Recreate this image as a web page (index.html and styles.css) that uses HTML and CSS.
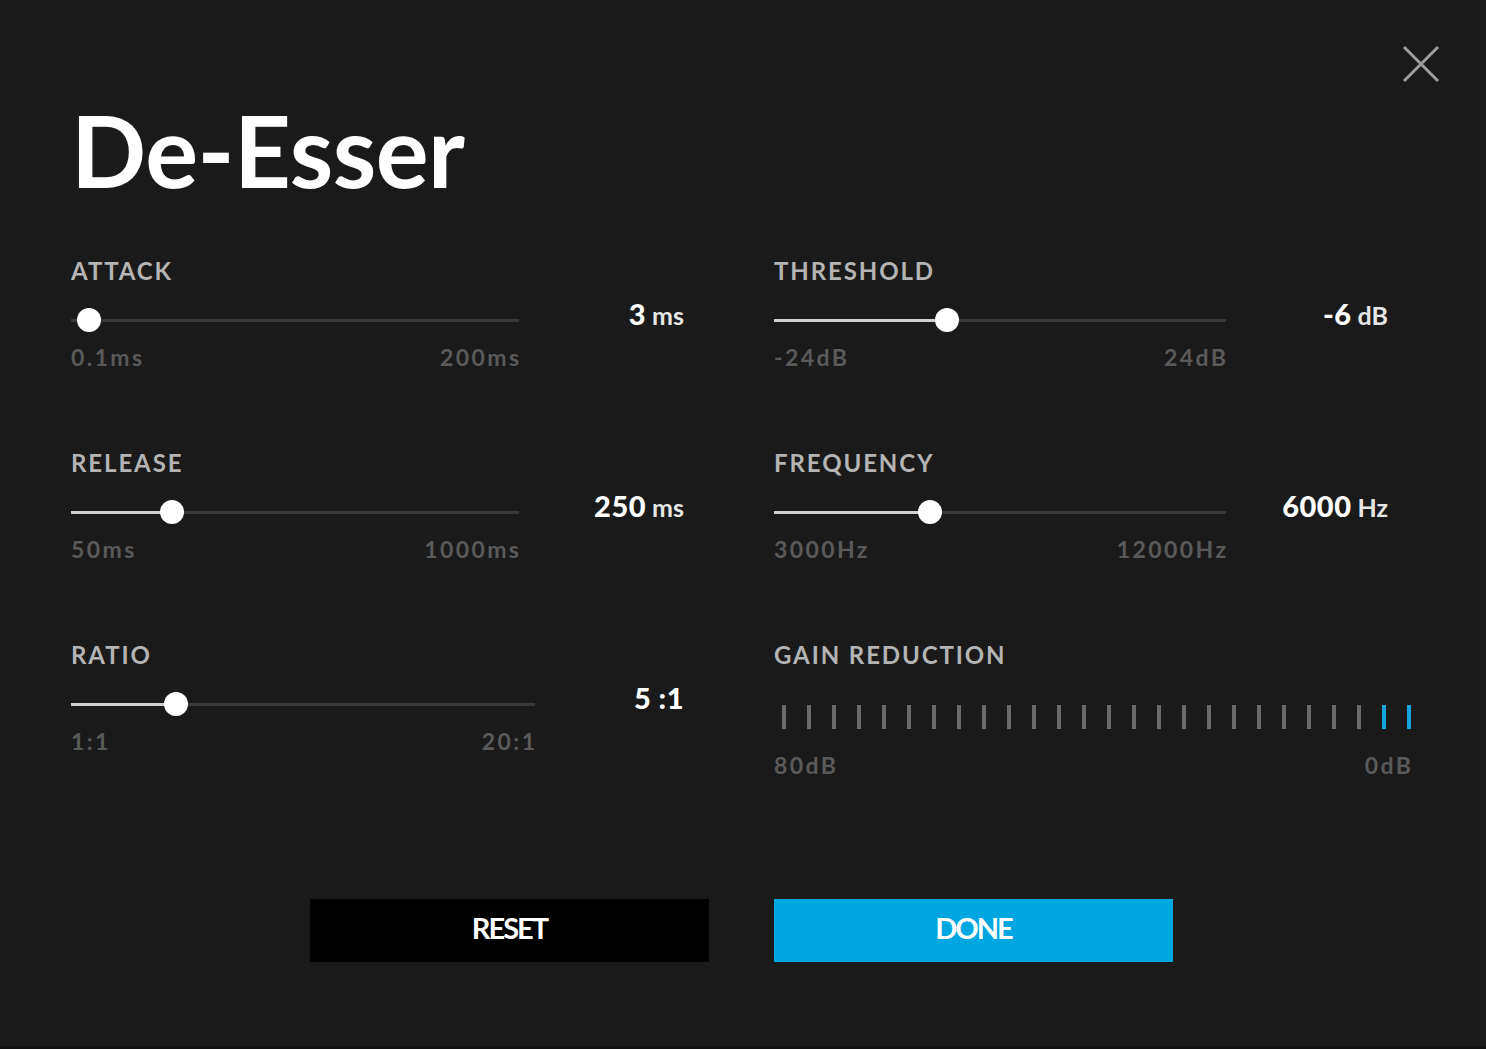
FILE: index.html
```html
<!DOCTYPE html>
<html lang="en">
<head>
<meta charset="utf-8">
<title>De-Esser</title>
<link rel="stylesheet" href="styles.css">
</head>
<body>
<div class="dialog">
  <button class="close" aria-label="Close">
    <svg width="38" height="38" viewBox="0 0 38 38"><path d="M2 2 L36 36 M36 2 L2 36" stroke="#9c9c9c" stroke-width="3" fill="none"/></svg>
  </button>
  <h1 class="title">De-Esser</h1>
  <div class="grid">
    <div class="col">
      <div class="param">
        <div class="label">ATTACK</div>
        <div class="ctrl">
          <div class="slider">
            <div class="track"><div class="fill" style="width:0px"></div><div class="thumb" style="left:18px"></div></div>
            <div class="scale"><span>0.1ms</span><span>200ms</span></div>
          </div>
          <div class="value"><b>3</b><span>ms</span></div>
        </div>
      </div>
      <div class="param">
        <div class="label">RELEASE</div>
        <div class="ctrl">
          <div class="slider">
            <div class="track"><div class="fill" style="width:101px"></div><div class="thumb" style="left:101px"></div></div>
            <div class="scale"><span>50ms</span><span>1000ms</span></div>
          </div>
          <div class="value"><b>250</b><span>ms</span></div>
        </div>
      </div>
      <div class="param">
        <div class="label">RATIO</div>
        <div class="ctrl">
          <div class="slider slider-wide">
            <div class="track"><div class="fill" style="width:105px"></div><div class="thumb" style="left:105px"></div></div>
            <div class="scale"><span>1:1</span><span>20:1</span></div>
          </div>
          <div class="value"><b>5 :1</b></div>
        </div>
      </div>
    </div>
    <div class="col">
      <div class="param">
        <div class="label">THRESHOLD</div>
        <div class="ctrl ctrl-right">
          <div class="slider slider-right">
            <div class="track"><div class="fill" style="width:173px"></div><div class="thumb" style="left:173px"></div></div>
            <div class="scale"><span>-24dB</span><span>24dB</span></div>
          </div>
          <div class="value"><b>-6</b><span>dB</span></div>
        </div>
      </div>
      <div class="param">
        <div class="label">FREQUENCY</div>
        <div class="ctrl ctrl-right">
          <div class="slider slider-right">
            <div class="track"><div class="fill" style="width:156px"></div><div class="thumb" style="left:156px"></div></div>
            <div class="scale"><span>3000Hz</span><span>12000Hz</span></div>
          </div>
          <div class="value"><b>6000</b><span>Hz</span></div>
        </div>
      </div>
      <div class="param">
        <div class="label">GAIN REDUCTION</div>
        <div class="meter">
          <div class="bars">
            <i></i><i></i><i></i><i></i><i></i><i></i><i></i><i></i><i></i><i></i><i></i><i></i><i></i><i></i><i></i><i></i><i></i><i></i><i></i><i></i><i></i><i></i><i></i><i></i><i class="on"></i><i class="on"></i>
          </div>
          <div class="scale scale-meter"><span>80dB</span><span>0dB</span></div>
        </div>
      </div>
    </div>
  </div>
  <div class="actions">
    <button class="btn btn-reset">RESET</button>
    <button class="btn btn-done">DONE</button>
  </div>
</div>
</body>
</html>
```
FILE: styles.css
```css
* { box-sizing: border-box; }
html, body { margin: 0; padding: 0; }
body {
  background: #1a1a1a;
  font-family: Lato, "Noto Sans", sans-serif;
  color: #fff;
}
.dialog {
  position: relative;
  width: 1486px;
  height: 1049px;
  padding: 100px 0 0 71px;
  background: #1a1a1a;
  border-bottom: 3px solid #111;
}
.close {
  position: absolute;
  top: 45px;
  right: 46px;
  width: 38px;
  height: 38px;
  padding: 0;
  border: 0;
  background: transparent;
  display: flex;
}
.title {
  margin: 0;
  font-size: 99px;
  line-height: 100px;
  font-weight: 700;
  letter-spacing: -0.5px;
  color: #fff;
}
.grid {
  display: flex;
  gap: 90px;
  margin-top: 58px;
}
.col { width: 613px; display: flex; flex-direction: column; }
.col + .col { width: 640px; }
.param { height: 192px; }
.label {
  font-size: 24px;
  line-height: 26px;
  font-weight: 700;
  letter-spacing: 1.9px;
  color: #b4b4b4;
}
.ctrl {
  display: flex;
  margin-top: 24px;
  width: 613px;
}
.ctrl-right { width: 614px; }
.slider { width: 448px; }
.slider-wide { width: 464px; }
.slider-right { width: 452px; }
.track {
  position: relative;
  height: 24px;
}
.track::before {
  content: "";
  position: absolute;
  left: 0; right: 0; top: 11px;
  height: 3px;
  background: #383838;
}
.fill {
  position: absolute;
  left: 0; top: 11px;
  height: 3px;
  background: #cfcfcf;
}
.thumb {
  position: absolute;
  top: 0;
  width: 24px;
  height: 24px;
  margin-left: -12px;
  border-radius: 50%;
  background: #fff;
}
.scale {
  display: flex;
  justify-content: space-between;
  margin-top: 13px;
  font-size: 23px;
  line-height: 24px;
  font-weight: 700;
  letter-spacing: 2.4px;
  color: #5a5a5a;
}
.scale span:last-child { margin-right: -2.4px; }
.value {
  margin-left: auto;
  margin-top: -10px;
  height: 32px;
  line-height: 32px;
  white-space: nowrap;
  display: flex;
  align-items: baseline;
  gap: 6px;
}
.value b {
  font-size: 29px;
  font-weight: 900;
  letter-spacing: 0.5px;
  color: #fff;
}
.value span {
  font-size: 25px;
  font-weight: 700;
  color: #e6e6e6;
}
.meter { margin-top: 37px; width: 637px; }
.bars {
  display: flex;
  justify-content: space-between;
  padding: 0 0 0 8px;
  height: 24px;
}
.bars i {
  display: block;
  width: 4px;
  height: 24px;
  background: #6a6a6a;
}
.bars i.on { background: #16a3da; }
.scale-meter { margin-top: 24px; }
.actions {
  display: flex;
  gap: 65px;
  margin: 65px 0 0 239px;
}
.btn {
  width: 399px;
  height: 63px;
  border: 0;
  padding: 0 0 7px;
  font-family: Lato, "Noto Sans", sans-serif;
  font-size: 29px;
  font-weight: 700;
  letter-spacing: -2px;
  color: #fff;
}
.btn-reset { background: #000; }
.btn-done { background: #00a6df; }
```
